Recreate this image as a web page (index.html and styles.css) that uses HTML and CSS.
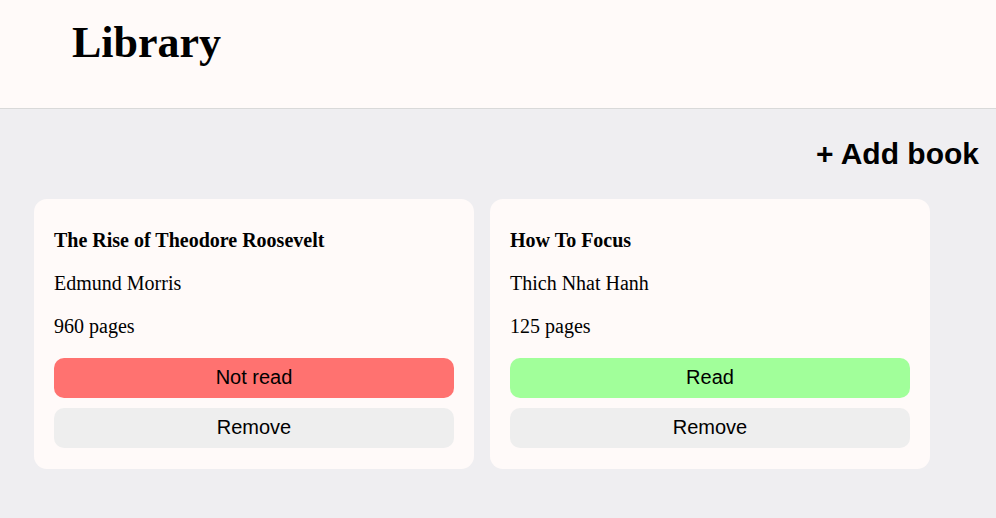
FILE: index.html
```html
<!DOCTYPE html>
<html lang="en">
<head>
<meta charset="utf-8">
<title>Library</title>
<link rel="stylesheet" href="styles.css">
</head>
<body>
<header class="header">
  <h1 class="title">Library</h1>
</header>
<main class="main">
  <div class="toolbar">
    <button class="add-btn">+ Add book</button>
  </div>
  <section class="books">
    <article class="card">
      <p class="book-title">The Rise of Theodore Roosevelt</p>
      <p class="book-meta">Edmund Morris</p>
      <p class="book-meta">960 pages</p>
      <div class="actions">
        <button class="btn btn-unread">Not read</button>
        <button class="btn btn-remove">Remove</button>
      </div>
    </article>
    <article class="card">
      <p class="book-title">How To Focus</p>
      <p class="book-meta">Thich Nhat Hanh</p>
      <p class="book-meta">125 pages</p>
      <div class="actions">
        <button class="btn btn-read">Read</button>
        <button class="btn btn-remove">Remove</button>
      </div>
    </article>
  </section>
</main>
</body>
</html>
```
FILE: styles.css
```css
* { box-sizing: border-box; }
html, body { margin: 0; padding: 0; }
body {
  background: #efeef1;
  font-family: "Liberation Serif", "Times New Roman", serif;
  color: #000;
  min-height: 518px;
}
.header {
  background: #fffaf9;
  height: 109px;
  border-bottom: 1px solid #d9d9d9;
  padding: 17px 0 0 72px;
}
.title {
  margin: 0;
  font-size: 44px;
  font-weight: bold;
  line-height: 52px;
}
.main {
  padding: 28px 17px 0 34px;
}
.toolbar {
  display: flex;
  justify-content: flex-end;
}
.add-btn {
  background: none;
  border: none;
  padding: 0;
  font-family: "Liberation Sans", Arial, sans-serif;
  font-weight: bold;
  font-size: 30px;
  line-height: 34px;
  color: #000;
}
.books {
  margin-top: 28px;
  display: grid;
  grid-template-columns: 440px 440px;
  gap: 16px;
}
.card {
  background: #fffaf9;
  border-radius: 13px;
  padding: 30px 20px 21px;
  display: flex;
  flex-direction: column;
}
.book-title, .book-meta {
  margin: 0 0 20px;
  font-size: 20px;
  line-height: 23px;
}
.book-title { font-weight: bold; }
.actions {
  display: flex;
  flex-direction: column;
  gap: 10px;
}
.btn {
  height: 40px;
  border: none;
  border-radius: 10px;
  font-family: "Liberation Sans", Arial, sans-serif;
  font-size: 20px;
  line-height: 23px;
  color: #000;
  padding: 0 0 2px;
}
.btn-unread { background: #ff7270; }
.btn-read { background: #a1ff9a; }
.btn-remove { background: #eeeeee; }
```
